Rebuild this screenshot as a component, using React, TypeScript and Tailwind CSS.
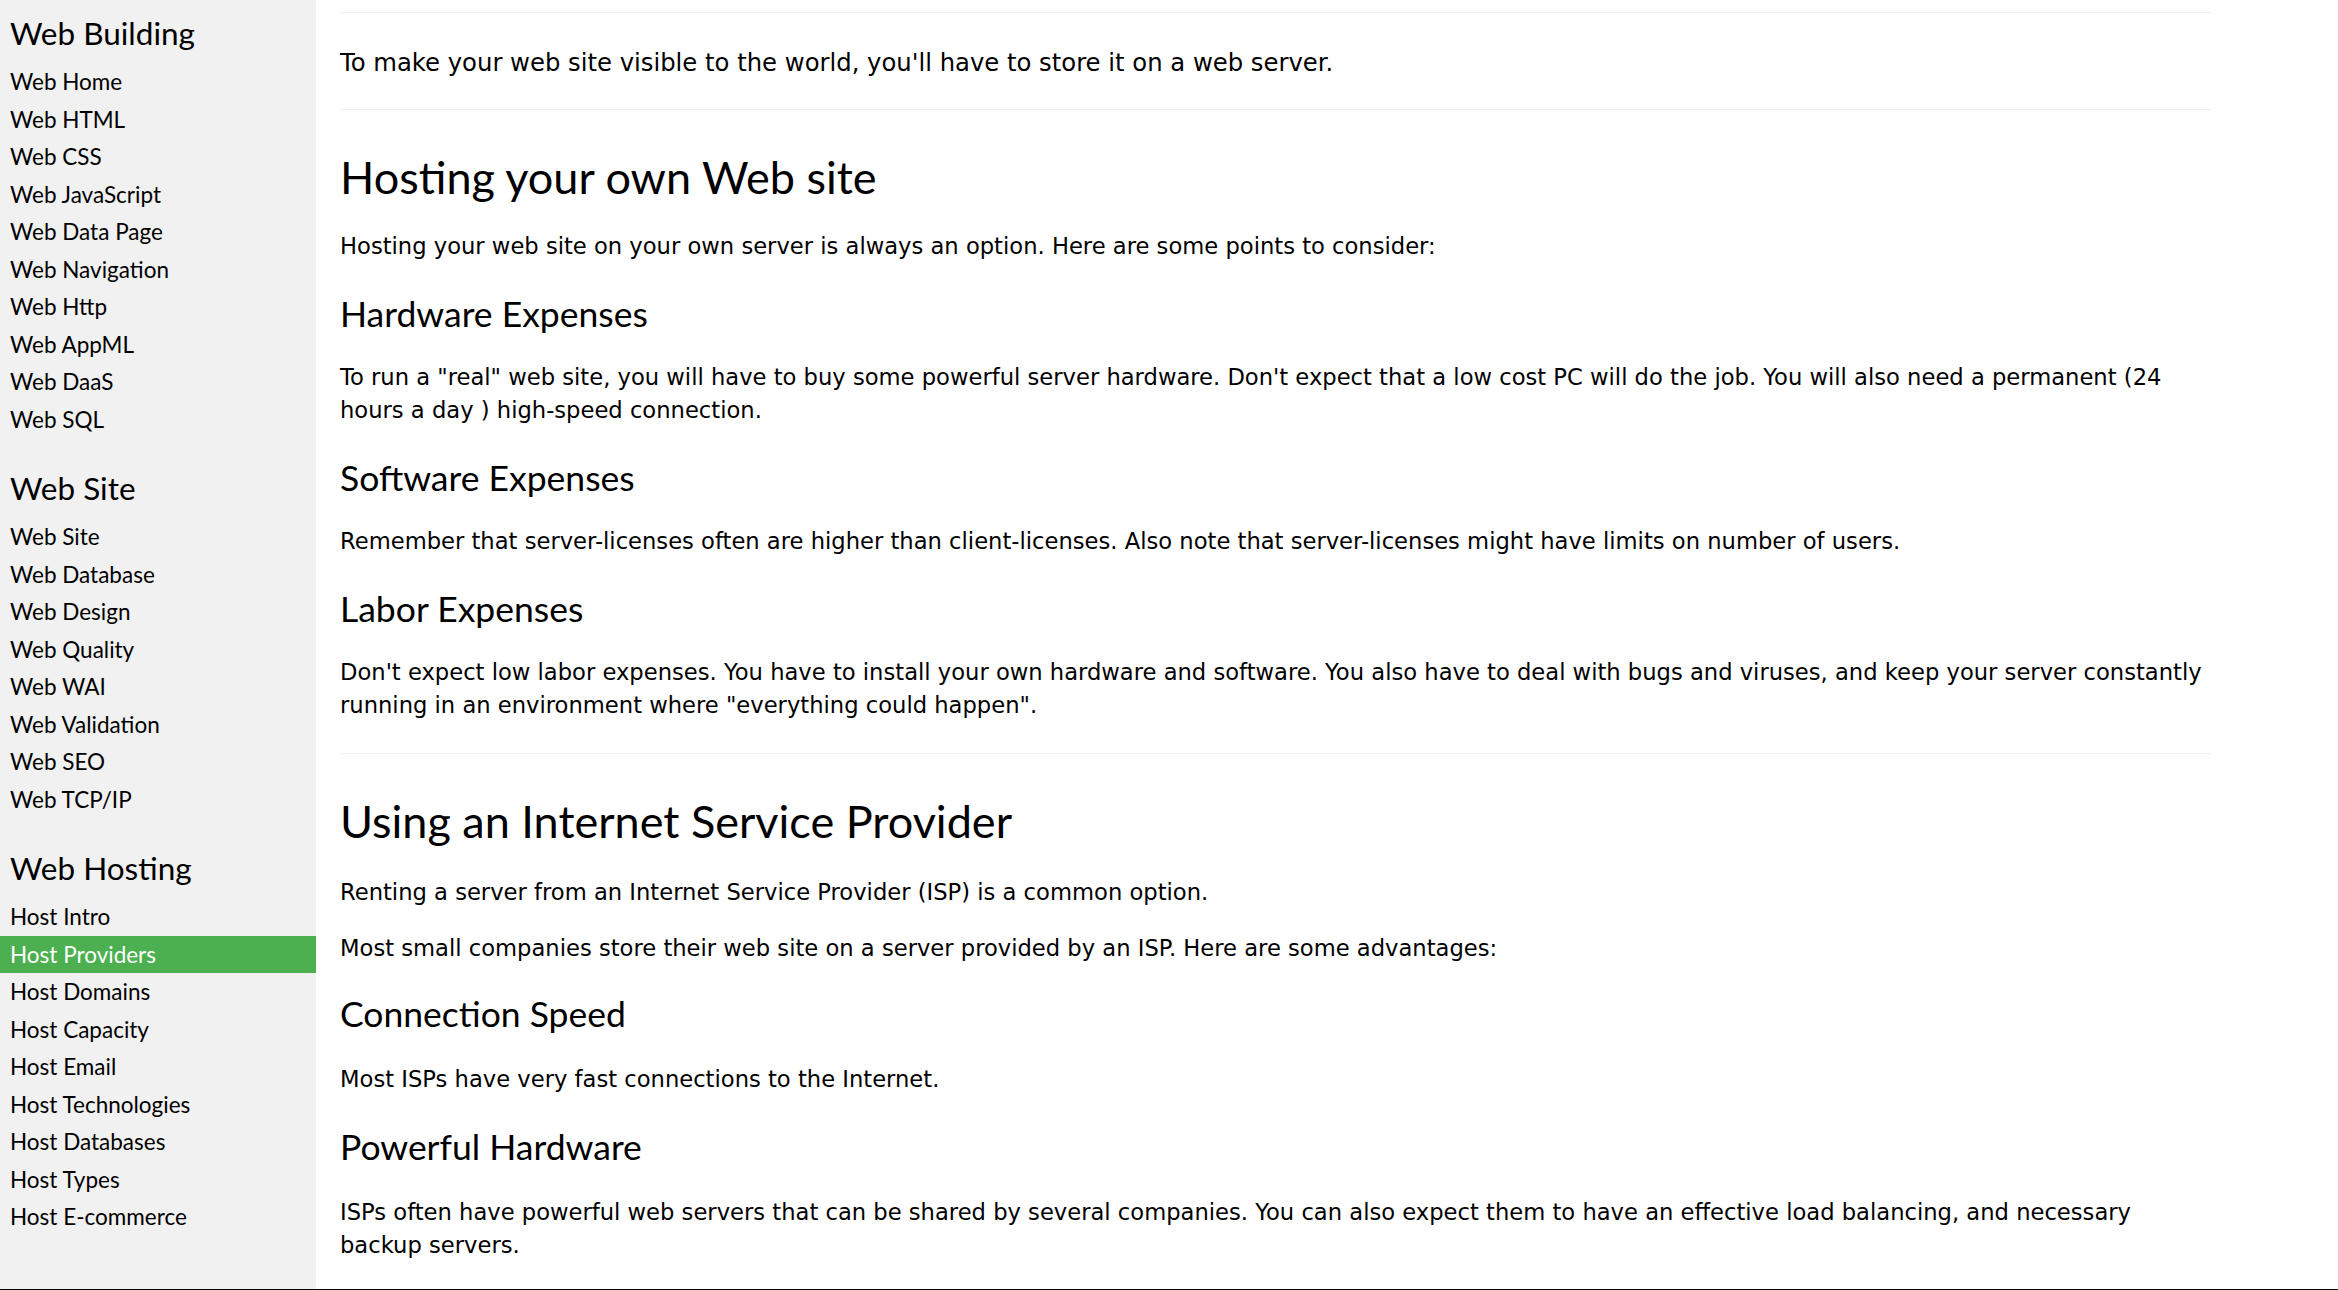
import React from "react";

// sidebar sections
const sections = [
  {
    title: "Web Building",
    links: [
      "Web Home",
      "Web HTML",
      "Web CSS",
      "Web JavaScript",
      "Web Data Page",
      "Web Navigation",
      "Web Http",
      "Web AppML",
      "Web DaaS",
      "Web SQL",
    ],
  },
  {
    title: "Web Site",
    links: [
      "Web Site",
      "Web Database",
      "Web Design",
      "Web Quality",
      "Web WAI",
      "Web Validation",
      "Web SEO",
      "Web TCP/IP",
    ],
  },
  {
    title: "Web Hosting",
    links: [
      "Host Intro",
      "Host Providers",
      "Host Domains",
      "Host Capacity",
      "Host Email",
      "Host Technologies",
      "Host Databases",
      "Host Types",
      "Host E-commerce",
    ],
  },
];

const active = "Host Providers";

function Sidebar() {
  return (
    <div className="w-[316px] shrink-0 bg-[#f1f1f1] pt-[14px] font-['Lato',sans-serif]">
      {sections.map((s, i) => (
        <div key={s.title} className={i > 0 ? "mt-[31px]" : ""}>
          <h2 className="px-[10px] text-[31.5px] leading-[38px] text-black">{s.title}</h2>
          <div className="mt-[11px]">
            {s.links.map((l) => (
              <a
                key={l}
                href="#"
                className={`block px-[10px] text-[22.5px] leading-[37.5px] ${
                  l === active ? "bg-[#4caf50] text-white" : "text-black"
                }`}
              >
                {l}
              </a>
            ))}
          </div>
        </div>
      ))}
    </div>
  );
}

function Hr({ className = "" }: { className?: string }) {
  return <div className={`h-px bg-[#eeeeee] ${className}`} />;
}

function H2({ children, className = "" }: { children: React.ReactNode; className?: string }) {
  return <h2 className={`font-['Lato',sans-serif] text-[45px] leading-[54px] ${className}`}>{children}</h2>;
}

function H3({ children, className = "" }: { children: React.ReactNode; className?: string }) {
  return <h3 className={`font-['Lato',sans-serif] text-[35.5px] leading-[44px] ${className}`}>{children}</h3>;
}

function P({ children, className = "" }: { children: React.ReactNode; className?: string }) {
  return (
    <p className={`font-['DejaVu_Sans','Verdana',sans-serif] text-[22.65px] leading-[33px] ${className}`}>
      {children}
    </p>
  );
}

export default function App() {
  return (
    <div className="flex h-[1290px] overflow-hidden border-b border-black bg-white text-black">
      <Sidebar />

      {/* Main content */}
      <div className="pl-[24px]">
        <div className="flex w-[1871px] flex-col pt-[12px]">
          <Hr />
          {/* intro paragraph is a bit larger */}
          <p className="mt-[33px] font-['DejaVu_Sans','Verdana',sans-serif] text-[24.3px] leading-[33px]">
            To make your web site visible to the world, you'll have to store it on a web server.
          </p>
          <Hr className="mt-[30px]" />

          <H2 className="mt-[40px]">Hosting your own Web site</H2>
          <P className="mt-[26px]">
            Hosting your web site on your own server is always an option. Here are some points to consider:
          </P>

          <H3 className="mt-[29px]">Hardware Expenses</H3>
          <P className="mt-[25px]">
            To run a "real" web site, you will have to buy some powerful server hardware. Don't expect that a
            low cost PC will do the job. You will also need a permanent (24 hours a day ) high-speed connection.
          </P>

          <H3 className="mt-[29px]">Software Expenses</H3>
          <P className="mt-[25px]">
            Remember that server-licenses often are higher than client-licenses. Also note that server-licenses
            might have limits on number of users.
          </P>

          <H3 className="mt-[29px]">Labor Expenses</H3>
          <P className="mt-[25px]">
            Don't expect low labor expenses. You have to install your own hardware and software. You also have to
            deal with bugs and viruses, and keep your server constantly running in an environment where
            "everything could happen".
          </P>
          <Hr className="mt-[31px]" />

          <H2 className="mt-[40px]">Using an Internet Service Provider</H2>
          <P className="mt-[28px]">Renting a server from an Internet Service Provider (ISP) is a common option.</P>
          <P className="mt-[23px]">
            Most small companies store their web site on a server provided by an ISP. Here are some advantages:
          </P>

          <H3 className="mt-[27px]">Connection Speed</H3>
          <P className="mt-[27px]">Most ISPs have very fast connections to the Internet.</P>

          <H3 className="mt-[29px]">Powerful Hardware</H3>
          <P className="mt-[27px]">
            ISPs often have powerful web servers that can be shared by several companies. You can also expect them
            to have an effective load balancing, and necessary backup servers.
          </P>
        </div>
      </div>
    </div>
  );
}
